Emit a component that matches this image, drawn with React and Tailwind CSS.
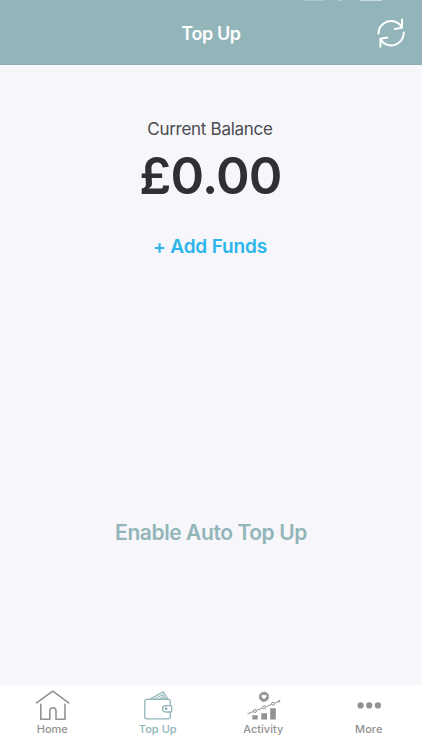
const HomeIcon = () => (
  <svg width="36" height="32" viewBox="0.4 0 36 32" fill="none" stroke="currentColor" strokeWidth="1.6" strokeLinecap="round" strokeLinejoin="round">
    <path d="M2 14.8 18.1 3.2l16.1 11.6" />
    <path d="M6.2 16.4v15h9v-8.6a3.1 3.1 0 0 1 6.2 0v8.6h9v-15" />
  </svg>
);

const WalletIcon = () => (
  <svg width="36" height="32" viewBox="0.2 0 36 32" fill="none" stroke="currentColor" strokeWidth="1.3" strokeLinecap="round" strokeLinejoin="round">
    <path d="M30.5 17.4v-4a2 2 0 0 0-2-2H7a2 2 0 0 0-2 2v15.4a2 2 0 0 0 2 2h21.5a2 2 0 0 0 2-2v-4.5" />
    <path d="M31 17.6h-5a3.2 3.2 0 0 0 0 6.4h5q.9 0 .9-.9v-4.6q0-.9-.9-.9z" />
    <circle cx="26.3" cy="20.8" r=".8" />
    <path d="M10.2 11.4 22.4 4.2q.9-.5 1.5.4l4.2 6.8" />
    <path d="m14.5 11.4 8.2-4.8 3 4.8M18.6 11.4l3.7-2.2 1.4 2.2" strokeWidth="1.1" />
  </svg>
);

const ActivityIcon = () => (
  <svg width="36" height="32" viewBox="0 0 36 32" fill="none" stroke="currentColor" strokeWidth="1">
    <circle cx="18" cy="8.8" r="4.6" fill="currentColor" stroke="none" />
    <circle cx="18" cy="8.8" r="4.8" strokeDasharray="1.6 .86" />
    <path d="m18 11.3-2.3-2.3a1.3 1.3 0 0 1 2.3-1.5 1.3 1.3 0 0 1 2.3 1.5z" fill="#fff" stroke="none" />
    <path d="m1.5 25.8 5.9-2.3M10.4 22.4l6.1-2.4M19.4 18.8l6.1-2.4M28.5 15.2l4.6-1.9" />
    <circle cx="8.9" cy="23" r="1.5" />
    <circle cx="18" cy="19.4" r="1.5" />
    <circle cx="27" cy="15.8" r="1.5" />
    <path d="m31.9 11.6 2.6 1.1-1.1 2.4z" fill="currentColor" stroke="none" />
    <path d="M6.3 27.2h5.4v4.2H6.3zM15.3 25.2H21v6.2h-5.7zM24.2 20.2h5.6v11.2h-5.6z" fill="currentColor" stroke="none" />
  </svg>
);

const MoreIcon = () => (
  <svg width="36" height="32" viewBox="0 0 36 32" fill="currentColor">
    <circle cx="9.6" cy="17.4" r="3.1" />
    <circle cx="18.2" cy="17.4" r="3.1" />
    <circle cx="26.9" cy="17.4" r="3.1" />
  </svg>
);

const RefreshIcon = () => (
  <svg width="32" height="32" viewBox="0 0.8 32 32" fill="none" stroke="currentColor" strokeWidth="2" strokeLinecap="round" strokeLinejoin="round">
    <path d="M3.4 16.6A12.6 12.6 0 0 1 26.6 9.6" />
    <path d="M27 2.4v8.1l-7.2 1.2" />
    <path d="M28.8 15.4A12.6 12.6 0 0 1 5.6 22.4" />
    <path d="M5.4 29.6v-8.1l7-1.2" />
  </svg>
);

const tabs = [
  { label: 'Home', Icon: HomeIcon },
  { label: 'Top Up', Icon: WalletIcon, active: true },
  { label: 'Activity', Icon: ActivityIcon },
  { label: 'More', Icon: MoreIcon },
];

const App = () => {
  return (
    <div className="flex h-[750px] w-full flex-col bg-[#f6f6fb] font-['Inter',sans-serif]">
      {/* Header */}
      <header className="relative grid h-[65px] shrink-0 grid-cols-[1fr_auto_1fr] items-center border-b border-[#8bb0b5] bg-[#92b5ba] pt-[3px] text-white">
        {/* Bottom edge of the status bar */}
        <div className="absolute right-10 top-0 flex h-px items-start opacity-50">
          <span className="mr-3.5 h-px w-5 bg-white/50" />
          <span className="mr-[18px] h-px w-1 bg-white/70" />
          <span className="h-px w-[22px] bg-white" />
        </div>
        <span />
        <h1 className="text-[18px] font-semibold leading-6 tracking-[-0.4px]">Top Up</h1>
        <button aria-label="Refresh" className="mr-[15px] justify-self-end">
          <RefreshIcon />
        </button>
      </header>

      {/* Balance */}
      <main className="flex flex-1 flex-col items-center">
        <p className="mt-[52px] pr-[2px] text-[17px] leading-6 tracking-[-0.28px] text-[#4c4c50]">Current Balance</p>
        <p className="mt-[5px] pr-px text-[51px] font-semibold leading-[60px] tracking-[-0.8px] text-[#303033]">£0.00</p>
        <button className="mt-[29px] pr-[2px] text-[19px] font-semibold leading-6 tracking-[-0.15px] text-[#2bb5ea]">+ Add Funds</button>
        <button className="mt-[260px] text-[21px] font-semibold leading-7 tracking-[-0.42px] text-[#92b5b8]">Enable Auto Top Up</button>
      </main>

      {/* Tab bar */}
      <nav className="grid h-[65px] shrink-0 grid-cols-4 bg-white pt-[3px]">
        {tabs.map(({ label, Icon, active }) => (
          <button key={label} className={`flex flex-col items-center ${active ? 'text-[#8fb5b9]' : 'text-[#929292]'}`}>
            <Icon />
            <span className="mt-px pr-px text-[11px] font-medium leading-4 tracking-[0.02px]">{label}</span>
          </button>
        ))}
      </nav>
    </div>
  );
};

export default App;
